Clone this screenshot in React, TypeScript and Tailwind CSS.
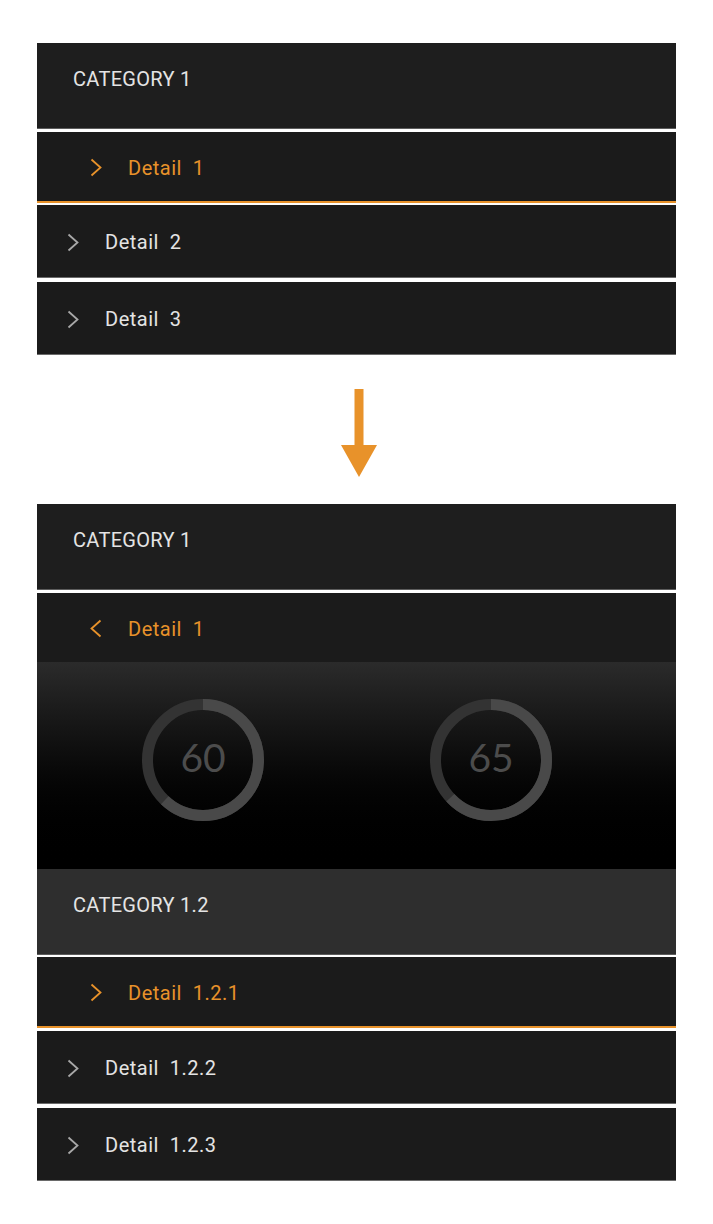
import React from "react";

const ORANGE = "#e8922a";

function Chevron({ dir, color }: { dir: "right" | "left"; color: string }) {
  return (
    <svg width="12" height="19" viewBox="0 0 12 19" fill="none" className="shrink-0">
      <path
        d={dir === "right" ? "M1.5 1.5 L10.5 9.5 L1.5 17.5" : "M10.5 1.5 L1.5 9.5 L10.5 17.5"}
        stroke={color}
        strokeWidth="1.8"
        strokeLinecap="butt"
        strokeLinejoin="miter"
      />
    </svg>
  );
}

function Category({ label, light }: { label: string; light?: boolean }) {
  return (
    <div
      className={`h-[86px] border-b border-[#5c5c5c] pl-[36px] pt-[22px] text-[20px] leading-[28px] tracking-[0.3px] text-[#e4e4e4] ${
        light ? "bg-[#2e2e2e]" : "bg-[#1e1e1e]"
      }`}
    >
      {label}
    </div>
  );
}

function Detail({
  label,
  selected,
  expanded,
  className,
}: {
  label: string;
  selected?: boolean;
  expanded?: boolean;
  className?: string;
}) {
  const active = selected || expanded;
  return (
    <div
      className={`flex items-center gap-[26px] bg-[#1b1b1b] pt-[2px] text-[20px] leading-[28px] tracking-[0.5px] whitespace-pre ${
        active ? "pl-[53px] text-[#e8922a]" : "pl-[30px] text-[#e4e4e4]"
      } ${
        expanded
          ? "h-[69px]"
          : selected
          ? "h-[71px] border-b-2 border-[#e8922a]"
          : "h-[73px] border-b border-[#6a6a6a]"
      } ${className ?? ""}`}
    >
      <Chevron dir={expanded ? "left" : "right"} color={active ? ORANGE : "#a8a8a8"} />
      <span>{label}</span>
    </div>
  );
}

function Gauge({ value, frac }: { value: number; frac: number }) {
  const r = 55.5;
  const c = 2 * Math.PI * r;
  return (
    <div className="relative w-[122px] h-[122px]">
      <svg width="122" height="122" viewBox="0 0 122 122" className="absolute inset-0">
        <circle cx="61" cy="61" r={r} fill="none" stroke="#333333" strokeWidth="11" />
        <circle
          cx="61"
          cy="61"
          r={r}
          fill="none"
          stroke="#494949"
          strokeWidth="11"
          strokeDasharray={`${c * frac} ${c}`}
          transform="rotate(-90 61 61)"
        />
      </svg>
      <div
        className="absolute inset-0 flex items-center justify-center pb-[5px] text-[39px] font-normal text-[#4c4c4c]"
        style={{ fontFamily: "Lato, 'Open Sans', sans-serif" }}
      >
        {value}
      </div>
    </div>
  );
}

export default function App() {
  return (
    <div
      className="w-[713px] bg-white px-[37px] pt-[43px] pb-[43px]"
      style={{ fontFamily: "Roboto, 'Noto Sans', 'Liberation Sans', sans-serif" }}
    >
      {/* Before */}
      <div className="flex flex-col">
        <div className="mb-[3px]">
          <Category label="CATEGORY 1" />
        </div>
        <Detail label={"Detail  1"} selected className="mb-[2px]" />
        <Detail label={"Detail  2"} className="mb-[4px]" />
        <Detail label={"Detail  3"} />
      </div>

      {/* Arrow */}
      <div className="flex justify-center pl-[4px] pt-[34px] pb-[27px]">
        <svg width="36" height="88" viewBox="0 0 36 88">
          <rect x="13.5" y="0" width="9" height="58" fill={ORANGE} />
          <polygon points="0,56 36,56 18,88" fill={ORANGE} />
        </svg>
      </div>

      {/* After */}
      <div className="flex flex-col">
        <div className="mb-[3px]">
          <Category label="CATEGORY 1" />
        </div>
        <Detail label={"Detail  1"} expanded />
        <div className="h-[207px] bg-gradient-to-b from-[#2b2b2b] to-[#000000] flex items-start pl-[105px] pt-[37px] gap-[166px]">
          <Gauge value={60} frac={0.62} />
          <Gauge value={65} frac={0.63} />
        </div>
        <div className="mb-[2px]">
          <Category label="CATEGORY 1.2" light />
        </div>
        <Detail label={"Detail  1.2.1"} selected className="mb-[3px]" />
        <Detail label={"Detail  1.2.2"} className="mb-[4px]" />
        <Detail label={"Detail  1.2.3"} />
      </div>
    </div>
  );
}
